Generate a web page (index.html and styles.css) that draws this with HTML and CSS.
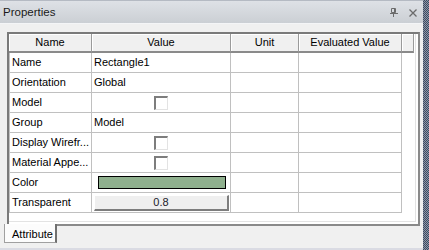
FILE: index.html
```html
<!DOCTYPE html>
<html>
<head>
<meta charset="utf-8">
<link rel="stylesheet" href="styles.css">
</head>
<body>
<div class="window">
  <div class="main">
    <div class="titlebar">
      <span class="title">Properties</span>
      <div class="title-icons">
        <svg class="pin" width="8" height="9" viewBox="0 0 8 9"><path d="M1.5 0.5h4v4h-4z M4.5 0.5v4 M0 5.5h8 M3.5 5.5v3.5" fill="none" stroke="#6b6b6b" stroke-width="1"/></svg>
        <svg class="close" width="8" height="8" viewBox="0 0 8 8"><path d="M0.5 0.5l7 7 M7.5 0.5l-7 7" fill="none" stroke="#6b6b6b" stroke-width="1.3"/></svg>
      </div>
    </div>
    <div class="content">
      <div class="frame">
        <div class="inner">
          <div class="hdr">
            <div class="hc c1">Name</div>
            <div class="hc c2">Value</div>
            <div class="hc c3">Unit</div>
            <div class="hc c4">Evaluated Value</div>
            <div class="hc c5"></div>
          </div>
          <div class="row"><div class="cell c1">Name</div><div class="cell c2">Rectangle1</div><div class="cell c3"></div><div class="cell c4"></div></div>
          <div class="row"><div class="cell c1">Orientation</div><div class="cell c2">Global</div><div class="cell c3"></div><div class="cell c4"></div></div>
          <div class="row"><div class="cell c1">Model</div><div class="cell c2 center"><span class="check"></span></div><div class="cell c3"></div><div class="cell c4"></div></div>
          <div class="row"><div class="cell c1">Group</div><div class="cell c2">Model</div><div class="cell c3"></div><div class="cell c4"></div></div>
          <div class="row"><div class="cell c1">Display Wirefr...</div><div class="cell c2 center"><span class="check"></span></div><div class="cell c3"></div><div class="cell c4"></div></div>
          <div class="row"><div class="cell c1">Material Appe...</div><div class="cell c2 center"><span class="check"></span></div><div class="cell c3"></div><div class="cell c4"></div></div>
          <div class="row"><div class="cell c1">Color</div><div class="cell c2 swatchcell"><span class="swatch"></span></div><div class="cell c3"></div><div class="cell c4"></div></div>
          <div class="row"><div class="cell c1">Transparent</div><div class="cell c2 btncell"><span class="btn">0.8</span></div><div class="cell c3"></div><div class="cell c4"></div></div>
        </div>
      </div>
    </div>
    <div class="tabstrip">
      <div class="tab">Attribute</div>
    </div>
  </div>
  <div class="checker"></div>
</div>
</body>
</html>
```
FILE: styles.css
```css
* { box-sizing: border-box; }
html, body { margin: 0; padding: 0; }
body {
  width: 429px;
  height: 250px;
  overflow: hidden;
  background: #f0f0f0;
  font-family: "Liberation Sans", Arial, sans-serif;
  font-size: 11px;
  color: #000;
}
.window { display: flex; width: 429px; height: 250px; }
.main { width: 423px; display: flex; flex-direction: column; }
.checker {
  width: 6px;
  height: 250px;
  background-color: #8a93a3;
  background-image: repeating-conic-gradient(#3d4a60 0 25%, #8e97a8 0 50%);
  background-size: 2px 2px;
}
.titlebar {
  height: 24px;
  display: flex;
  align-items: center;
  justify-content: space-between;
  padding: 0 6px 0 3px;
  background: linear-gradient(#dee1e6, #cbcfd4);
  border-top: 1px solid #b5bac3;
  border-bottom: 1px solid #f4f5f7;
}
.title { font-size: 11.5px; color: #1a1a1a; padding-bottom: 1px; }
.title-icons { display: flex; align-items: center; gap: 11px; padding-top: 1px; }
.content { padding: 8px 4px 0 7px; }
.frame {
  width: 413px;
  height: 194px;
  border: 2px solid #8a8a8a;
  border-top-color: #7a7a7a;
  border-left-color: #7a7a7a;
  background: #fff;
  padding: 0 2px 2px 0;
}
.inner {
  height: 100%;
  border-right: 1px solid #e3e3e3;
  border-bottom: 1px solid #e3e3e3;
}
.hdr { display: flex; height: 19px; }
.hc {
  background: #f0f0f0;
  text-align: center;
  line-height: 17px;
  border-right: 1px solid #9a9a9a;
  border-bottom: 2px solid #8a8a8a;
  box-shadow: inset 1px 1px 0 #fff;
}
.c1 { width: 83px; }
.c2 { width: 139px; }
.c3 { width: 68px; }
.c4 { width: 103px; }
.c5 { width: 12px; }
.row { display: flex; height: 20px; }
.cell {
  border-right: 1px solid #c0c0c0;
  border-bottom: 1px solid #c0c0c0;
  line-height: 19px;
  padding-left: 2px;
  white-space: nowrap;
  overflow: hidden;
}
.row .c1 { border-left: 1px solid #c0c0c0; padding-left: 2px; }
.center { display: flex; justify-content: center; align-items: center; padding-left: 0; }
.check {
  width: 14px;
  height: 14px;
  background: #fff;
  border-top: 2px solid #7d7d7d;
  border-left: 2px solid #7d7d7d;
  border-right: 1px solid #e3e3e3;
  border-bottom: 1px solid #e3e3e3;
}
.swatchcell { display: flex; align-items: center; padding-left: 6px; }
.swatch {
  width: 128px;
  height: 13px;
  background: #8fb08e;
  border: 1px solid #000;
}
.btncell { display: flex; align-items: center; padding-left: 2px; }
.btn {
  width: 135px;
  height: 16px;
  background: #efefef;
  border-top: 1px solid #fff;
  border-left: 1px solid #fff;
  border-right: 2px solid #7d7d7d;
  border-bottom: 2px solid #7d7d7d;
  text-align: center;
  line-height: 13px;
  color: #1a1a2a;
}
.tabstrip {
  flex: 1;
  padding-left: 4px;
  border-bottom: 2px solid #dadbe3;
}
.tab {
  position: relative;
  margin-top: -2px;
  width: 53px;
  height: 19px;
  background: #fcfcfc;
  border-left: 1px solid #a0a0a0;
  border-right: 2px solid #6f6f6f;
  border-bottom: 1px solid #a0a0a0;
  padding: 3px 0 0 7px;
  line-height: 15px;
}
```
